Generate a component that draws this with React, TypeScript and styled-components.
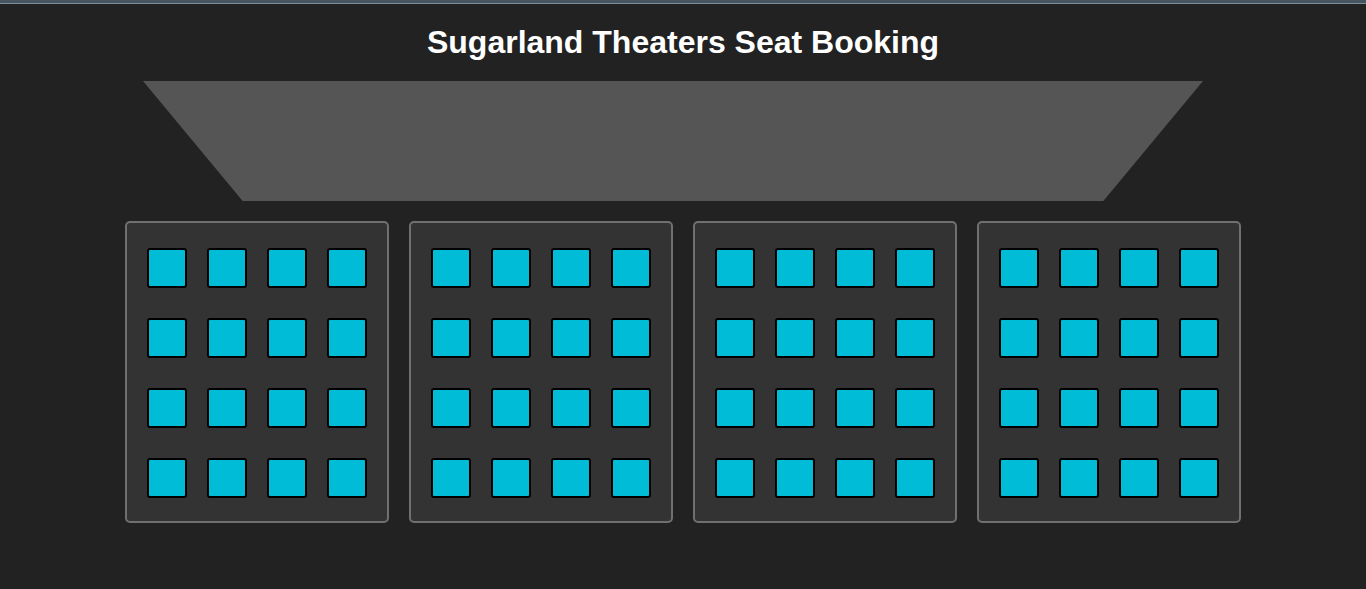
import React from "react";
import styled, { createGlobalStyle } from "styled-components";

const GlobalStyle = createGlobalStyle`
  html, body {
    margin: 0;
    padding: 0;
    background: #222222;
    font-family: "Liberation Sans", Arial, sans-serif;
  }
`;

const Page = styled.div`
  min-height: 589px;
  background: #222222;
  display: flex;
  flex-direction: column;
`;

const TopBar = styled.div`
  height: 3px;
  background: #46555f;
  border-bottom: 1px solid #7d8c96;
`;

const Title = styled.h1`
  margin: 20px 0 20px;
  font-size: 32px;
  line-height: 37px;
  font-weight: 700;
  color: #ffffff;
  text-align: center;
`;

const Screen = styled.div`
  width: 1060px;
  height: 120px;
  margin-left: calc(50% - 540px);
  background: #555555;
  clip-path: polygon(0 0, 100% 0, 90.6% 100%, 9.4% 100%);
`;

const Sections = styled.div`
  display: flex;
  justify-content: center;
  gap: 20px;
  margin-top: 20px;
`;

const Section = styled.div`
  box-sizing: border-box;
  width: 264px;
  padding: 10px 10px 8px;
  background: #333333;
  border: 2px solid #707070;
  border-radius: 5px;
  display: grid;
  grid-template-columns: repeat(4, 60px);
`;

const Seat = styled.div`
  box-sizing: border-box;
  width: 40px;
  height: 40px;
  margin: 15px 10px;
  background: #00bcd6;
  border: 2px solid #000000;
  border-radius: 3px;
  cursor: pointer;
`;

const sections = [0, 1, 2, 3];
const seats = Array.from({ length: 16 }, (_, i) => i);

export default function App() {
  return (
    <>
      <GlobalStyle />
      <Page>
        <TopBar />
        <Title>Sugarland Theaters Seat Booking</Title>
        <Screen />
        <Sections>
          {sections.map((s) => (
            <Section key={s}>
              {seats.map((i) => (
                <Seat key={i} />
              ))}
            </Section>
          ))}
        </Sections>
      </Page>
    </>
  );
}
